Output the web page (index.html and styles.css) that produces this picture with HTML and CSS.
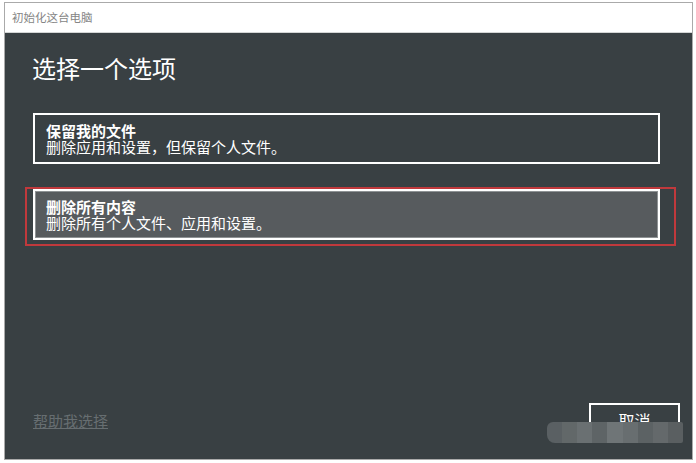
FILE: index.html
```html
<!DOCTYPE html>
<html lang="zh-CN">
<head>
<meta charset="utf-8">
<title>初始化这台电脑</title>
<link rel="stylesheet" href="styles.css">
</head>
<body>
<div class="window">
  <div class="titlebar">初始化这台电脑</div>
  <div class="content">
    <h1 class="heading">选择一个选项</h1>
    <div class="options">
      <div class="card">
        <div class="card-title">保留我的文件</div>
        <div class="card-desc">删除应用和设置，但保留个人文件。</div>
      </div>
      <div class="focus">
        <div class="card card-selected">
          <div class="card-title">删除所有内容</div>
          <div class="card-desc">删除所有个人文件、应用和设置。</div>
        </div>
      </div>
    </div>
    <div class="footer">
      <a class="help">帮助我选择</a>
      <div class="btn">取消</div>
    </div>
    <div class="mosaic">
      <span class="m1"></span><span class="m2"></span><span class="m3"></span><span class="m4"></span><span class="m5"></span><span class="m6"></span><span class="m7"></span><span class="m8"></span><span class="m9"></span>
    </div>
  </div>
</div>
</body>
</html>
```

FILE: styles.css
```css
* { box-sizing: border-box; }
html, body { margin: 0; padding: 0; background: #ffffff; }
body {
  font-family: "Noto Sans CJK SC", "Noto Sans", sans-serif;
}
.window {
  margin: 2px 0 0 4px;
  width: 689px;
  height: 458px;
  border: 1px solid #aaaaaa;
  display: flex;
  flex-direction: column;
}
.titlebar {
  height: 30px;
  background: #ffffff;
  color: #858585;
  font-size: 11.5px;
  line-height: 29px;
  padding-left: 7px;
  border-bottom: 1px solid #d4d6d6;
}
.content {
  position: relative;
  flex: 1;
  background: #394043;
  padding: 22px 12px 0 28px;
  display: flex;
  flex-direction: column;
}
.heading {
  margin: 0 0 33px -1px;
  font-size: 24px;
  line-height: 25px;
  font-weight: 400;
  color: #ffffff;
}
.options {
  display: flex;
  flex-direction: column;
  gap: 23px;
  margin-right: 20px;
}
.card {
  height: 51px;
  border: 2px solid #ffffff;
  padding: 8px 0 0 11px;
  color: #ffffff;
  font-size: 15px;
  line-height: 15.5px;
}
.card-title { font-weight: 700; }
.focus {
  border: 2px solid #c0393c;
  padding: 0 14px 4px 6px;
  margin: 0 -16px 0 -8px;
}
.card-selected {
  background: #575b5e;
  box-shadow: inset 0 0 0 1px #8e9294;
}
.footer {
  margin-top: auto;
  margin-bottom: 20px;
  display: flex;
  justify-content: space-between;
  align-items: center;
}
.help {
  color: #676e71;
  font-size: 15px;
  line-height: 17px;
  text-decoration: underline;
  margin-top: -2px;
}
.btn {
  width: 91px;
  height: 36px;
  border: 2px solid #ffffff;
  color: #ffffff;
  font-size: 16px;
  line-height: 30px;
  text-align: center;
}
.mosaic {
  position: absolute;
  left: 542px;
  top: 389px;
  width: 136px;
  height: 21px;
  display: flex;
  border-radius: 6px 2px 2px 8px;
  overflow: hidden;
}
.mosaic span { flex: 1; height: 100%; }
.m1 { background: #5a6063; }
.m2 { background: #626869; }
.m3 { background: #6a7072; }
.m4 { background: #5e6466; }
.m5 { background: #6f7577; }
.m6 { background: #686e70; }
.m7 { background: #5c6264; }
.m8 { background: #64696b; }
.m9 { background: #5a5f61; }
```
